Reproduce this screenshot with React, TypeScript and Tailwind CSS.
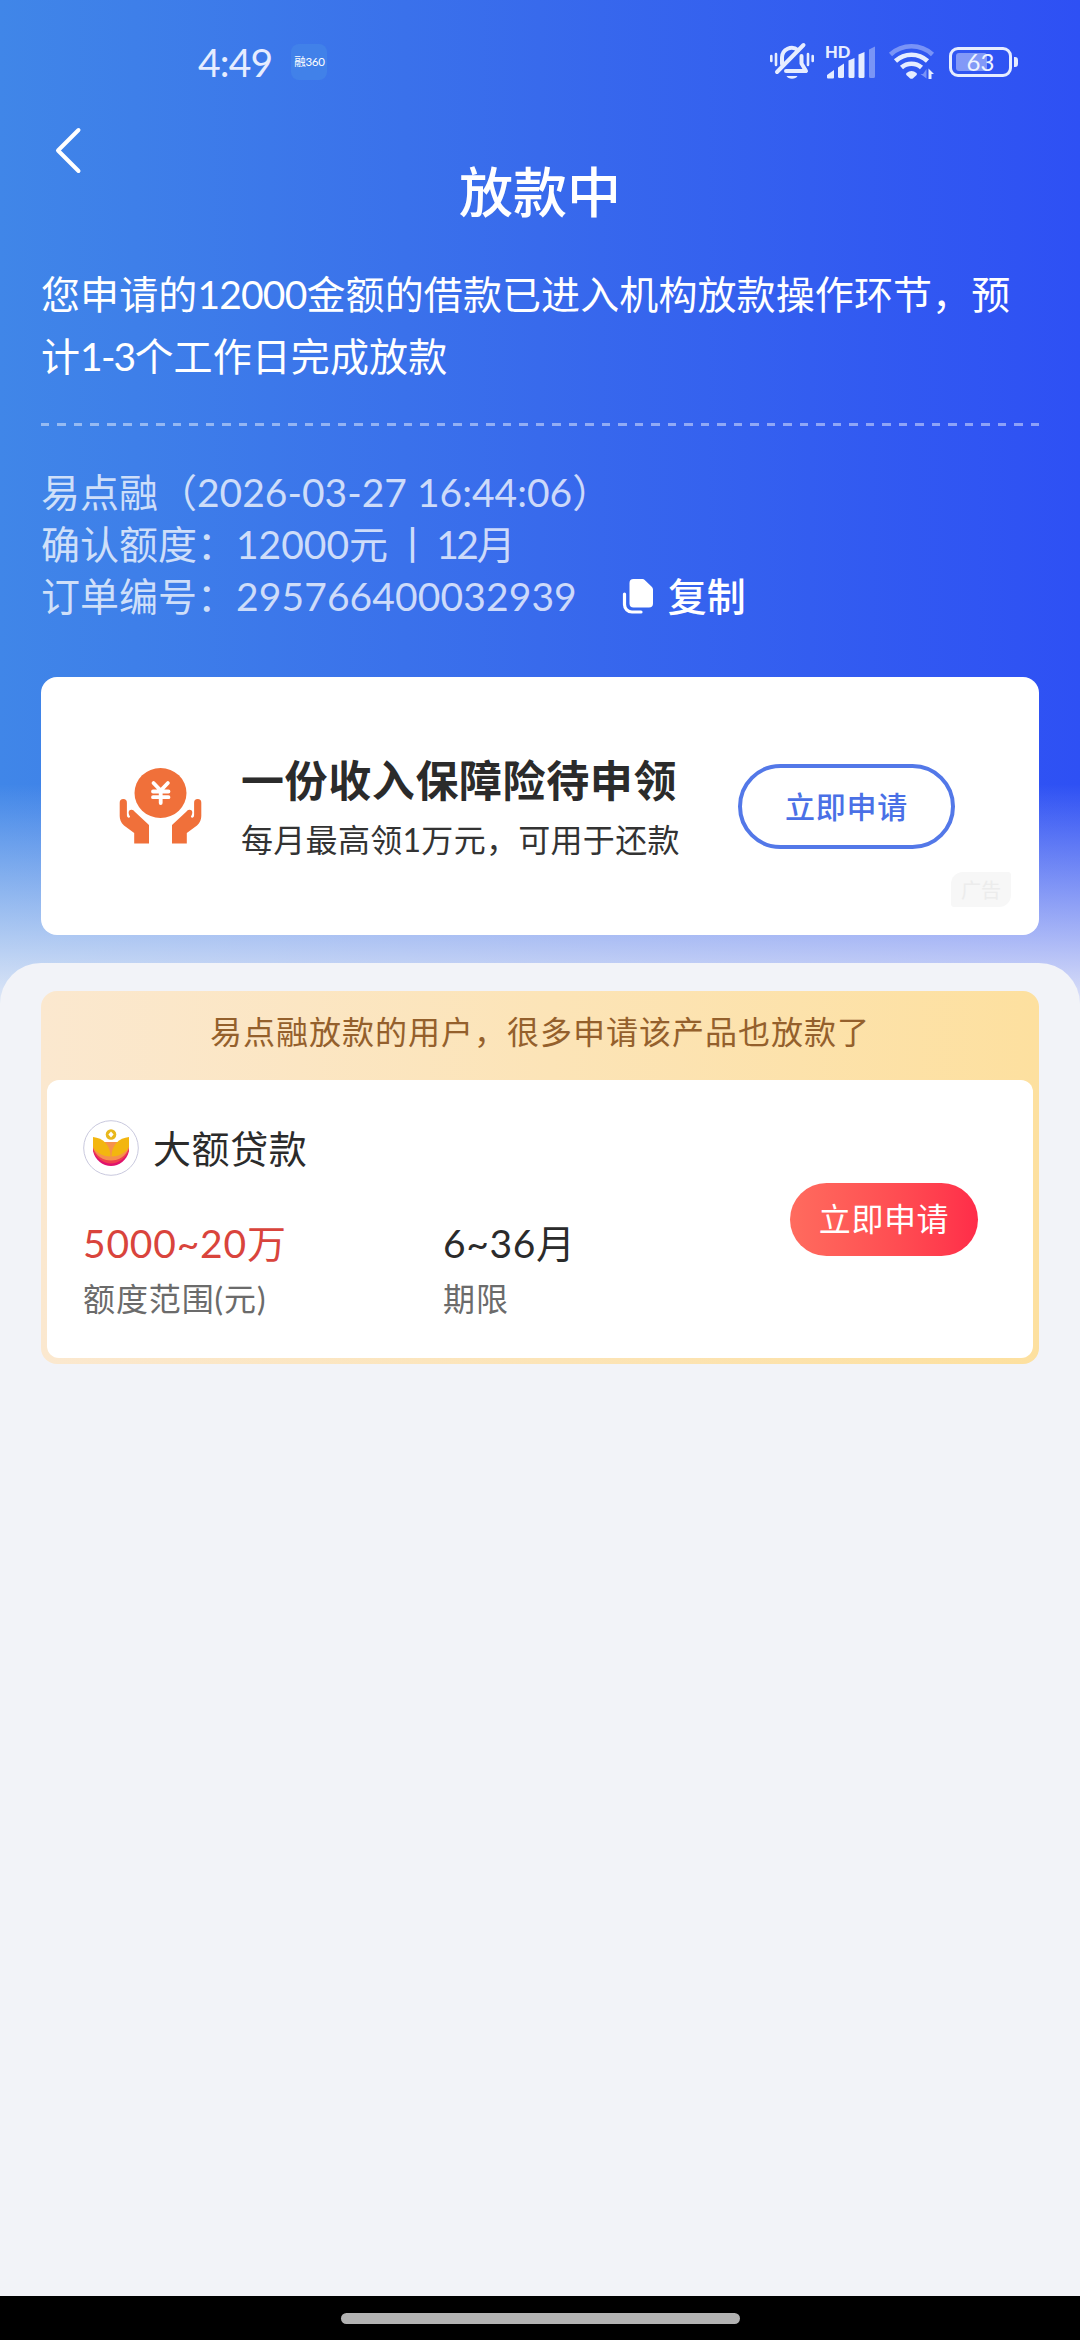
import React from "react";

interface StatItem {
  value: string;
  label: string;
  valueClass: string;
  className: string;
}

const stats: StatItem[] = [
  {
    value: "5000~20万",
    label: "额度范围(元)",
    valueClass: "text-[#d9443c] tracking-[0.8px]",
    className: "w-[360px]",
  },
  {
    value: "6~36月",
    label: "期限",
    valueClass: "text-[#2b2b2b] tracking-[0.6px]",
    className: "w-[300px]",
  },
];

const HAND_PATH =
  "M0.700 34.700a3.600 3.600 0 0 1 7.200 0v12.300c0 2.800 2.300 3.500 3.200 1.800-2.500-4.300-1.500-7.300 1.600-7 1.200.1 2 .8 2.800 1.600L30 57v18.500H15.200V65L5 57.500C1.700 54.500.700 51 .700 48z";

const MutedBellIcon = () => (
  <svg width="46" height="40" viewBox="0 0 46 40" fill="none" stroke="#e6edff" strokeLinecap="round">
    <path d="M2.3 14v5M7 12v11M39 12v11M43.7 14v5" strokeWidth="2.6" />
    <path d="M13 22v-6.500a9.700 9.700 0 0 1 16-7.300" strokeWidth="4" />
    <path d="M32.500 14v7.500l4.500 7.500H17" strokeWidth="4" strokeLinejoin="round" />
    <path d="M34.500 3 8 30" strokeWidth="4" />
    <path d="M17.500 34h11a6 4.500 0 0 1-11 0z" fill="#e6edff" stroke="none" />
  </svg>
);

const SignalIcon = () => (
  <div className="relative h-[34px] w-[50px]">
    <span className="absolute left-0 top-[-1px] font-['Lato'] text-[16.500px] font-black leading-[16px] text-[#e6edff]">
      HD
    </span>
    <svg className="absolute inset-0" width="50" height="34" viewBox="0 0 50 34" fill="#e6edff">
      <path d="M2 32.500V30l7-5v7.500a1 1 0 0 1-1 1H3a1 1 0 0 1-1-1z" />
      <path d="M13 22.500 19 18.500v13a1.500 1.500 0 0 1-1.500 1.500h-3a1.500 1.500 0 0 1-1.500-1.500z" />
      <path d="M23.500 15.500 29.500 13v18.500A1.500 1.500 0 0 1 28 33h-3a1.500 1.500 0 0 1-1.500-1.500z" />
      <path d="M33.500 9.500 39.500 7v24.500A1.500 1.500 0 0 1 38 33h-3a1.500 1.500 0 0 1-1.500-1.500z" />
      <path d="M44 4.500 50 1.500v30a1.500 1.500 0 0 1-1.500 1.500h-3a1.500 1.500 0 0 1-1.500-1.500z" opacity="0.4" />
    </svg>
  </div>
);

const WifiIcon = () => (
  <svg width="48" height="36" viewBox="0 0 48 36" fill="none" stroke="#e6edff">
    <path d="M2.500 10.500a31 31 0 0 1 42 0" strokeWidth="4.600" opacity="0.4" />
    <path d="M7.500 17a23.500 23.500 0 0 1 32 0" strokeWidth="4.600" />
    <path d="M13.500 23.500a15 15 0 0 1 20 0" strokeWidth="4.600" />
    <path d="m18.500 29a8 8 0 0 1 10 0c.8 1 .4 1.800-.4 2.600l-3 2.600a2.500 2.500 0 0 1-3.200 0l-3-2.600c-.8-.8-1.200-1.600-.4-2.600z" fill="#e6edff" stroke="none" />
    <path d="M38.500 25v9.500l-6-4.500h2.500z" fill="#e6edff" stroke="none" opacity="0.4" />
    <path d="M40.500 35V24.500l5.500 5.500H43.500V35z" fill="#e6edff" stroke="none" />
  </svg>
);

const BatteryIcon = () => (
  <div className="flex items-center gap-[2px]">
    <div className="relative flex h-[30px] w-[63px] items-center justify-center rounded-[9px] border-[3px] border-[#e6edff]">
      <div className="absolute left-[4px] top-[3px] h-[18px] w-[31px] rounded-[3px] bg-white/40" />
      <span className="relative font-['Lato'] text-[24px] leading-[24px] text-[#eef3ff]">63</span>
    </div>
    <div className="h-[10px] w-[4px] rounded-r-[3px] bg-[#e6edff]" />
  </div>
);

const CopyIcon = () => (
  <svg width="32" height="36" viewBox="0 0 32 36" fill="none">
    <path
      d="M11.500 1h9a3 3 0 0 1 2.200 1L30 9a4 4 0 0 1 1 2.500v14a4 4 0 0 1-4 4H11.500a4 4 0 0 1-4-4V5a4 4 0 0 1 4-4z"
      fill="#fff"
    />
    <path d="M2.500 16v10.500a7.500 7.500 0 0 0 7.500 7.500h9" stroke="#fff" strokeWidth="3.200" strokeLinecap="round" />
  </svg>
);

const HandsIcon = () => (
  <svg width="84" height="76" viewBox="0 0 84 76" fill="#f0703a">
    <ellipse cx="41.500" cy="25" rx="26" ry="25" />
    <path
      d="m34.500 15 7.200 7.500 7.200-7.500M41.700 22.500v12.500M34 23.500h15.500M34 29.200h15.500"
      fill="none"
      stroke="#fff"
      strokeWidth="3.800"
      strokeLinecap="round"
    />
    <path d={HAND_PATH} />
    <path transform="matrix(-1 0 0 1 83 0)" d={HAND_PATH} />
  </svg>
);

const LoanLogo = () => (
  <svg width="56" height="56" viewBox="0 0 56 56">
    <circle cx="28" cy="28" r="27.300" fill="#fff" stroke="#c9c9de" strokeWidth="1" />
    <path d="M10 26v5c2 9 10 15 18 15s16-6 18-15v-5z" fill="#e0126c" />
    <path d="M10 25v5c3 8 10 13.500 18 13.500S43 38 46 30v-5z" fill="#ef3f4f" />
    <path d="M10 22v6c3 8 10 12.500 18 12.500S43 36 46 28v-6z" fill="#f6914c" />
    <path d="M10 17c10 1 17.500 8 17.500 19.500C19 36.500 12 32 10 26.500z" fill="#f3b60f" />
    <path d="M46 17c-10 1-17.500 8-17.500 19.500C37 36.500 44 32 46 26.500z" fill="#f3b60f" />
    <circle cx="28" cy="14.500" r="5.300" fill="#e8b81c" />
    <path d="m28 11.500 2.600 3-2.600 3-2.600-3z" fill="#fff" />
  </svg>
);

const StatusBar = () => (
  <div className="flex h-[84px] shrink-0 items-end pl-[198px] pr-[62px]">
    <div className="flex h-[44px] items-center">
      <span className="font-['Lato'] text-[39px] leading-[44px] tracking-[-0.8px] text-[#e6edff]">4:49</span>
      <div className="ml-[19px] flex h-[36px] w-[36px] items-center justify-center rounded-[8px] bg-[#4181e9]">
        <span className="whitespace-nowrap font-['Lato','Noto_Sans_CJK_SC',sans-serif] text-[11.500px] leading-none tracking-[-0.3px] text-white">
          融360
        </span>
      </div>
    </div>
    <div className="ml-auto flex h-[44px] items-center">
      <MutedBellIcon />
      <div className="ml-[10px]">
        <SignalIcon />
      </div>
      <div className="ml-[13px]">
        <WifiIcon />
      </div>
      <div className="ml-[13px]">
        <BatteryIcon />
      </div>
    </div>
  </div>
);

const AdCard = () => (
  <div className="relative mx-[41px] mt-[55px] flex h-[258px] shrink-0 items-center rounded-[16px] bg-white pl-[78px] pr-[84px]">
    <HandsIcon />
    <div className="ml-[38px] flex flex-col pt-[4px]">
      <h2 className="text-[43px] font-bold leading-[54px] tracking-[0.6px] text-[#2b2b2b]">
        一份收入保障险待申领
      </h2>
      <p className="mt-[9px] text-[32px] leading-[46px] tracking-[0.3px] text-[#333]">
        每月最高领1万元，可用于还款
      </p>
    </div>
    <button className="ml-auto h-[85px] w-[217px] rounded-full border-[4px] border-[#5378e8] text-[30px] font-medium leading-[76px] tracking-[0.8px] text-[#4a70e6]">
      立即申请
    </button>
    <span className="absolute bottom-[28px] right-[28px] flex h-[35px] w-[60px] items-center justify-center rounded-[3px] rounded-br-[12px] rounded-tl-[12px] bg-[#f7f7f7] text-[20px] leading-none text-[#ececec]">
      广告
    </span>
  </div>
);

const ProductCard = () => (
  <div className="mx-[41px] flex h-[373px] flex-col rounded-[16px] bg-linear-to-r from-[#fbe8cf] to-[#fde09f] px-[6px] pb-[6px]">
    <p className="h-[89px] text-center text-[32px] leading-[82px] tracking-[1px] text-[#94602c]">
      易点融放款的用户，很多申请该产品也放款了
    </p>
    <div className="flex flex-1 items-center rounded-[12px] bg-white pl-[36px] pr-[55px]">
      <div className="flex flex-1 flex-col pt-[8px]">
        <div className="flex items-center">
          <LoanLogo />
          <span className="ml-[14px] text-[38px] leading-[56px] tracking-[0.6px] text-[#2b2b2b]">
            大额贷款
          </span>
        </div>
        <div className="mt-[39px] flex">
          {stats.map((item) => (
            <div key={item.label} className={item.className}>
              <div className={`text-[39px] leading-[56px] ${item.valueClass}`}>{item.value}</div>
              <div className="text-[32px] leading-[56px] tracking-[0.9px] text-[#6b6b6b]">
                {item.label}
              </div>
            </div>
          ))}
        </div>
      </div>
      <button className="h-[73px] w-[188px] rounded-full bg-linear-to-r from-[#ff6b5e] to-[#ff2c49] text-[32px] leading-[70px] tracking-[0.6px] text-white">
        立即申请
      </button>
    </div>
  </div>
);

export default function App() {
  return (
    <div className="flex h-[2340px] w-[1080px] flex-col overflow-hidden bg-[#f2f3f8] font-['Lato','Noto_Sans_CJK_SC',sans-serif]">
      <header className="flex h-[1004px] shrink-0 flex-col bg-[linear-gradient(to_bottom,rgba(242,243,248,0)_784px,#f2f3f8_1030px),linear-gradient(to_right,#4086e8,#386aec_50%,#2e50f4)]">
        <StatusBar />

        <div className="relative flex h-[144px] shrink-0 items-center justify-center pt-[74px]">
          <button className="absolute left-[54px] top-[42px]">
            <svg width="28" height="50" viewBox="0 0 28 50" fill="none" stroke="#fff" strokeWidth="4" strokeLinecap="round" strokeLinejoin="round">
              <path d="M24.500 4 4 24.500 24.500 45" />
            </svg>
          </button>
          <h1 className="text-[54px] font-medium leading-[70px] text-white">放款中</h1>
        </div>

        <p className="mx-[41px] mt-[35px] whitespace-nowrap text-[39px] leading-[62px] tracking-[0.1px] text-white">
          您申请的<span className="tracking-[-0.8px]">12000</span>金额的借款已进入机构放款操作环节，预
          <br />
          计<span className="tracking-[-1.8px]">1-3</span>个工作日完成放款
        </p>

        <div className="mx-[41px] mt-[36px] h-[3px] shrink-0 bg-[repeating-linear-gradient(to_right,rgba(255,255,255,0.45)_0_8.500px,transparent_8.500px_16.500px)]" />

        <div className="mx-[41px] mt-[40px] text-[39px] leading-[52px] text-white/75">
          <div>易点融（2026-03-27 16:44:06）</div>
          <div>
            确认额度：12000元<span className="ml-[5px] mr-[4px]">丨</span>
            <span className="tracking-[-2.500px]">12</span>月
          </div>
          <div className="flex items-center">
            <span>
              订单编号：<span className="tracking-[0.1px]">295766400032939</span>
            </span>
            <span className="ml-[45px] flex items-center gap-[14px] font-medium text-white">
              <CopyIcon />
              复制
            </span>
          </div>
        </div>

        <AdCard />
      </header>

      <main className="-mt-[41px] flex-1 rounded-t-[41px] bg-[#f2f3f8] pt-[28px]">
        <ProductCard />
      </main>

      <footer className="flex h-[44px] shrink-0 justify-center bg-black pt-[17px]">
        <div className="h-[11px] w-[399px] rounded-full bg-[#b2b2b2]" />
      </footer>
    </div>
  );
}
